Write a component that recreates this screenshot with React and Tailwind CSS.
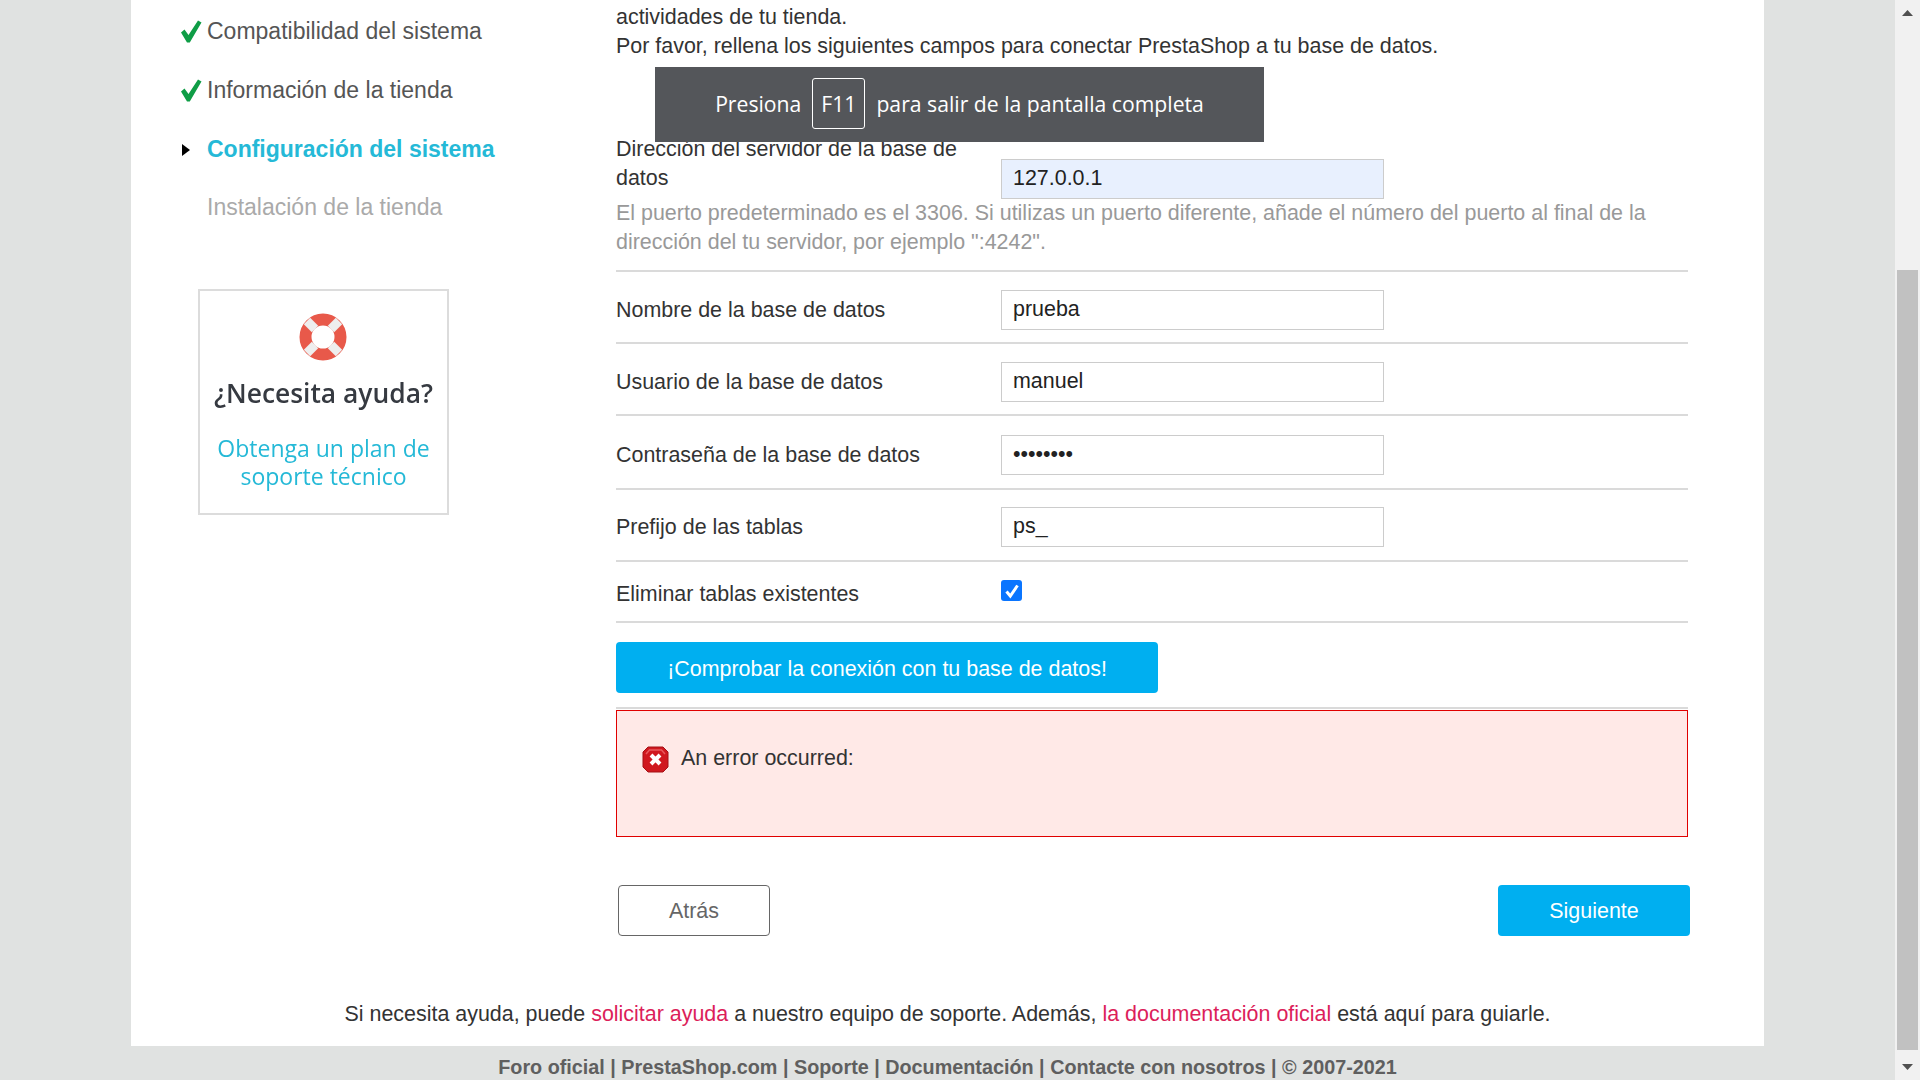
const Check = () => (
  <svg width="22" height="24" viewBox="0 0 22 24" className="shrink-0 -mt-[2px]">
    <path d="M1 13.5 L4.5 10.5 L8.5 16 L18 1.5 L21.5 3.5 L9.8 23.5 L7 23.5 Z" fill="#0f9d46" />
  </svg>
);

const Field = ({ label, value, rowClass }) => (
  <div className={rowClass}>
    <label className="w-[385px] shrink-0 leading-[40px]">{label}</label>
    <div className="w-[383px] h-[40px] border border-[#ccc] bg-white px-[11px] leading-[37px] text-[#222]">{value}</div>
  </div>
);

export default function App() {
  return (
    <div className="relative flex h-screen overflow-hidden bg-[#e0e2e1] font-['Liberation_Sans',Arial,sans-serif]">
      <div className="flex-1 min-w-0 flex flex-col">
        <div className="mx-[131px] w-[1633px] h-[1046px] shrink-0 bg-white flex text-[21.44px] text-[#333]">
          <aside className="w-[485px] shrink-0 pl-[49px] pt-[2px] text-[23px]">
            <div className="flex items-center h-[59px] text-[#555]"><Check /><span className="ml-[5px]">Compatibilidad del sistema</span></div>
            <div className="flex items-center h-[59px] text-[#555]"><Check /><span className="ml-[5px]">Información de la tienda</span></div>
            <div className="flex items-center h-[59px] text-[#25b9d7] font-bold">
              <svg width="8" height="12" viewBox="0 0 8 12" className="ml-[2px] mr-[17px]"><path d="M0 0 L8 6 L0 12 Z" fill="#000" /></svg>
              <span>Configuración del sistema</span>
            </div>
            <div className="flex items-center h-[57px] text-[#aaa] pl-[27px]">Instalación de la tienda</div>
            <div className="ml-[18px] mt-[53px] w-[251px] h-[226px] border-2 border-[#dcdcdc] flex flex-col items-center font-['Open_Sans',sans-serif] blur-[0.4px]">
              <svg width="48" height="48" viewBox="0 0 48 48" className="mt-[22px] -ml-[1px]">
                <circle cx="24" cy="24" r="17.5" fill="none" stroke="#e8594a" strokeWidth="12" />
                <g stroke="#eee" strokeWidth="9">
                  <path d="M8 8 L16 16" /><path d="M40 8 L32 16" /><path d="M8 40 L16 32" /><path d="M40 40 L32 32" />
                </g>
              </svg>
              <div className="mt-[15px] text-[26.4px] font-semibold text-[#363a41] whitespace-nowrap leading-[34px]">¿Necesita ayuda?</div>
              <div className="mt-[24px] text-[23px] leading-[28px] text-[#25b9d7] text-center whitespace-nowrap">Obtenga un plan de<br />soporte técnico</div>
            </div>
          </aside>
          <main className="w-[1072px] shrink-0 leading-[29px]">
            <p className="pt-[3px]">actividades de tu tienda.</p>
            <p>Por favor, rellena los siguientes campos para conectar PrestaShop a tu base de datos.</p>
            <div className="mt-[72px] h-[139px] border-b-2 border-[#dadada]">
              <div className="flex items-start">
                <label className="w-[385px] shrink-0 pt-[2px]">Dirección del servidor de la base de datos</label>
                <div className="w-[383px] h-[40px] mt-[26px] border border-[#ccc] bg-[#e8f0fe] px-[11px] leading-[37px] text-[#222]">127.0.0.1</div>
              </div>
              <p className="text-[#999]">El puerto predeterminado es el 3306. Si utilizas un puerto diferente, añade el número del puerto al final de la dirección del tu servidor, por ejemplo ":4242".</p>
            </div>
            <Field label="Nombre de la base de datos" value="prueba" rowClass="flex items-start h-[72px] border-b-2 border-[#dadada] pt-[18px]" />
            <Field label="Usuario de la base de datos" value="manuel" rowClass="flex items-start h-[72px] border-b-2 border-[#dadada] pt-[18px]" />
            <Field label="Contraseña de la base de datos" value="••••••••" rowClass="flex items-start h-[74px] border-b-2 border-[#dadada] pt-[19px]" />
            <Field label="Prefijo de las tablas" value="ps_" rowClass="flex items-start h-[72px] border-b-2 border-[#dadada] pt-[17px]" />
            <div className="flex items-start h-[61px] border-b-2 border-[#dadada] pt-[18px]">
              <label className="w-[385px] shrink-0 leading-[29px]">Eliminar tablas existentes</label>
              <div className="w-[21px] h-[21px] rounded-[3px] bg-[#0a75ff] flex items-center justify-center">
                <svg width="16" height="16" viewBox="0 0 16 16"><path d="M2.5 8.5 L6.3 13 L13.5 2.5" fill="none" stroke="#fff" strokeWidth="3" /></svg>
              </div>
            </div>
            <div className="mt-[19px] w-[542px] h-[51px] rounded-[4px] bg-[#00aff0] text-white text-center leading-[55px]">¡Comprobar la conexión con tu base de datos!</div>
            <div className="mt-[14px] border-t-2 border-[#dadada] pt-[1px]">
              <div className="h-[127px] border border-[#e00000] bg-[#ffe9e7] flex items-start pl-[25px] pt-[35px]">
                <svg width="27" height="27" viewBox="0 0 27 27" className="shrink-0">
                  <path d="M6 1 H21 L26 6 V21 L21 26 H6 L1 21 V6 Z" fill="#d0181f" stroke="#a51116" />
                  <path d="M4 8 L7.5 4 H19.5 L23 8" fill="none" stroke="#e8595d" strokeWidth="1.5" />
                  <path d="M9 9 L18 18 M18 9 L9 18" stroke="#fff" strokeWidth="4" />
                </svg>
                <span className="ml-[12px] leading-[25px]">An error occurred:</span>
              </div>
            </div>
            <div className="mt-[48px] w-[1074px] flex justify-between pl-[2px]">
              <div className="w-[152px] h-[51px] border border-[#666] rounded-[4px] text-[#666] text-center leading-[51px]">Atrás</div>
              <div className="w-[192px] h-[51px] rounded-[4px] bg-[#00aff0] text-white text-center leading-[52px]">Siguiente</div>
            </div>
          </main>
        </div>
      </div>
      <div className="w-[25px] h-screen shrink-0 bg-[#f1f1f1] flex flex-col items-center">
        <svg width="11" height="6" viewBox="0 0 11 6" className="mt-[10px] shrink-0"><path d="M5.5 0 L11 6 H0 Z" fill="#505050" /></svg>
        <div className="mt-[254px] w-[21px] h-[780px] bg-[#c1c1c1]" />
        <svg width="11" height="6" viewBox="0 0 11 6" className="mt-[14px] shrink-0"><path d="M0 0 H11 L5.5 6 Z" fill="#505050" /></svg>
      </div>
      <div className="absolute left-[131px] top-[1000px] w-[1633px] text-center text-[21.44px] leading-[29px] text-[#333]">
        Si necesita ayuda, puede <span className="text-[#dc1e5a]">solicitar ayuda</span> a nuestro equipo de soporte. Además, <span className="text-[#dc1e5a]">la documentación oficial</span> está aquí para guiarle.
      </div>
      <div className="absolute left-[131px] top-[1050px] w-[1633px] text-center text-[19.8px] font-bold leading-[34px] text-[#5f5f5f]">
        Foro oficial | PrestaShop.com | Soporte | Documentación | Contacte con nosotros | © 2007-2021
      </div>
      <div className="absolute left-[655px] top-[67px] w-[609px] h-[75px] bg-[#54565a] flex items-center justify-center text-white text-[21.2px] font-['Open_Sans',sans-serif] pb-[2px]">
        <span>Presiona</span>
        <span className="mx-[11px] w-[53px] h-[51px] border border-white rounded-[3px] flex items-center justify-center">F11</span>
        <span>para salir de la pantalla completa</span>
      </div>
    </div>
  );
}
